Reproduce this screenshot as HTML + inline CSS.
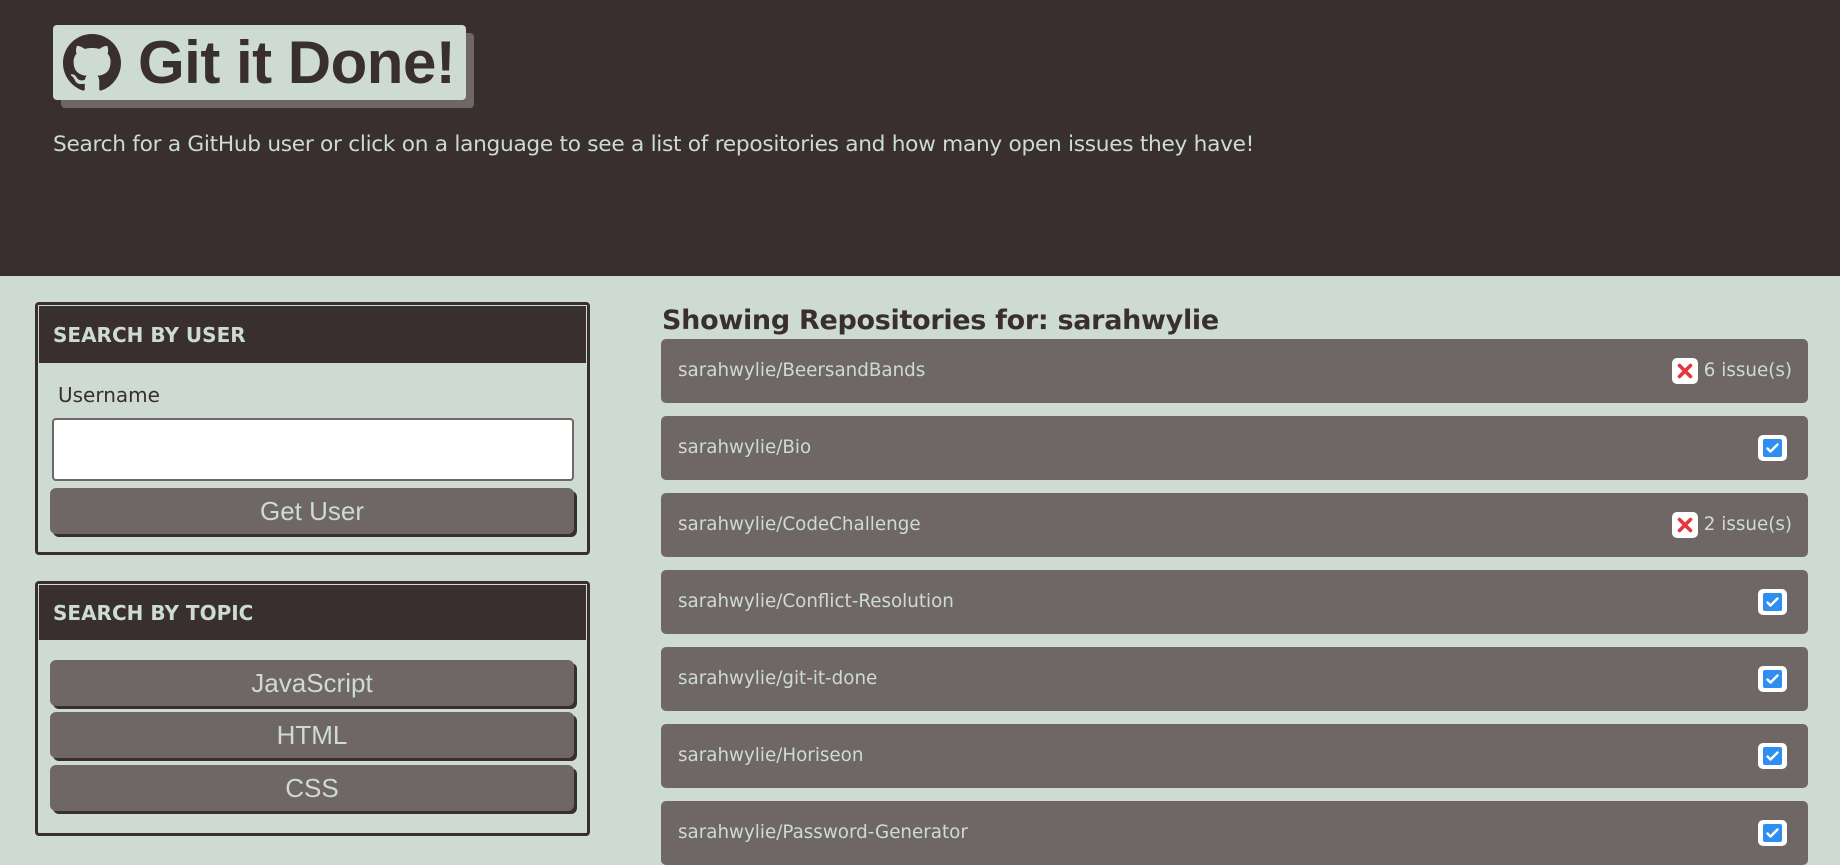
<!DOCTYPE html>
<html><head><meta charset="utf-8"><style>
*{box-sizing:border-box;margin:0;padding:0}
body{width:1840px;height:855px;overflow:hidden;background:#cddbd3;font-family:"DejaVu Sans","Liberation Sans",sans-serif;position:relative}
header{position:absolute;left:0;top:0;width:1840px;height:276px;background:#382f2e}
.logo{position:absolute;left:53px;top:25px;width:413px;height:75px;background:#cddbd3;border-radius:4px;box-shadow:8px 8px 0 #6f6766;color:#382f2e;font-family:"Liberation Sans",sans-serif;font-weight:bold;font-size:60px;line-height:75px;padding-left:85px;white-space:nowrap;letter-spacing:-0.5px}
.logo svg{position:absolute;left:10px;top:9px}
.sub{position:absolute;left:53px;top:132px;color:#cddbd3;font-size:21.7px;letter-spacing:-0.3px;white-space:nowrap}
.card{position:absolute;left:35px;width:555px;border:3px solid #382f2e;border-radius:4px}
.card h2{background:#382f2e;color:#cddbd3;font-size:20px;font-weight:bold;padding-left:14px;border:1px solid #cddbd3;border-bottom:none}
.btn{position:absolute;left:12px;width:524px;height:46px;background:#6f6766;border-radius:6px;box-shadow:3px 3px 0 #382f2e;color:#cddbd3;font-family:"Liberation Sans",sans-serif;font-size:26px;text-align:center;line-height:46px}
.h{position:absolute;left:662px;top:305px;font-size:27px;font-weight:bold;color:#382f2e;letter-spacing:-0.3px}
.row{position:absolute;left:661px;width:1147px;height:64px;background:#6f6766;border-radius:5px;color:#cddbd3;font-size:18.3px;line-height:64px;padding-left:17px}
.ok{position:absolute;right:21px;top:19px;width:29px;height:26px;background:#fff;border-radius:5px}
.ok svg{position:absolute;left:5px;top:4px}
.bad{position:absolute;right:110px;top:19px;width:26px;height:26px;background:#fff;border-radius:5px}
.bad svg{position:absolute;left:5px;top:5px}
.iss{position:absolute;right:16px;top:0}
</style></head><body>
<header>
<div class="logo"><svg width="58" height="58" viewBox="0 0 16 16"><path fill="#382f2e" d="M8 0C3.58 0 0 3.58 0 8c0 3.54 2.290 6.53 5.47 7.59.4.07.55-.17.55-.38 0-.19-.01-.82-.01-1.490-2.01.37-2.530-.49-2.690-.94-.09-.23-.48-.94-.82-1.130-.28-.15-.68-.52-.01-.53.63-.01 1.080.58 1.230.82.72 1.21 1.870.87 2.330.66.07-.52.28-.87.51-1.070-1.780-.2-3.640-.89-3.640-3.950 0-.87.31-1.59.82-2.150-.08-.2-.36-1.02.08-2.120 0 0 .67-.21 2.2.82.64-.18 1.32-.27 2-.27.68 0 1.36.09 2 .27 1.53-1.04 2.2-.82 2.2-.82.44 1.1.16 1.92.08 2.12.51.56.82 1.27.82 2.15 0 3.07-1.87 3.75-3.65 3.95.29.25.54.73.54 1.48 0 1.07-.01 1.93-.01 2.2 0 .21.15.46.55.38A8.013 8.013 0 0016 8c0-4.42-3.58-8-8-8z"/></svg>Git it Done!</div>
<div class="sub">Search for a GitHub user or click on a language to see a list of repositories and how many open issues they have!</div>
</header>

<div class="card" style="top:302px;height:253px">
<h2 style="height:58px;line-height:58px">SEARCH BY USER</h2>
<div style="position:absolute;left:20px;top:78px;font-size:20px;color:#382f2e">Username</div>
<div style="position:absolute;left:14px;top:113px;width:522px;height:63px;background:#fff;border:2px solid #6f6766;border-radius:4px"></div>
<div class="btn" style="top:183px">Get User</div>
</div>

<div class="card" style="top:581px;height:255px">
<h2 style="height:56px;line-height:56px">SEARCH BY TOPIC</h2>
<div class="btn" style="top:76px">JavaScript</div>
<div class="btn" style="top:128px">HTML</div>
<div class="btn" style="top:181px">CSS</div>
</div>

<div class="h">Showing Repositories for: sarahwylie</div>

<svg width="0" height="0" style="position:absolute"><defs>
<symbol id="ck" viewBox="0 0 19 18"><rect width="19" height="18" rx="2" fill="#2f8ff0"/><path d="M4.5 9.5l3 3 7-7" stroke="#fff" stroke-width="2.4" fill="none" stroke-linecap="round" stroke-linejoin="round"/></symbol>
<symbol id="xx" viewBox="0 0 16 16"><path d="M2.5 2.5l11 11M13.5 2.5l-11 11" stroke="#e8343b" stroke-width="3.6" stroke-linecap="round"/></symbol>
</defs></svg>

<div class="row" style="top:339px">sarahwylie/BeersandBands<span class="bad"><svg width="16" height="16"><use href="#xx"/></svg></span><span class="iss">6 issue(s)</span></div>
<div class="row" style="top:416px">sarahwylie/Bio<span class="ok"><svg width="19" height="18"><use href="#ck"/></svg></span></div>
<div class="row" style="top:493px">sarahwylie/CodeChallenge<span class="bad"><svg width="16" height="16"><use href="#xx"/></svg></span><span class="iss">2 issue(s)</span></div>
<div class="row" style="top:570px">sarahwylie/Conflict-Resolution<span class="ok"><svg width="19" height="18"><use href="#ck"/></svg></span></div>
<div class="row" style="top:647px">sarahwylie/git-it-done<span class="ok"><svg width="19" height="18"><use href="#ck"/></svg></span></div>
<div class="row" style="top:724px">sarahwylie/Horiseon<span class="ok"><svg width="19" height="18"><use href="#ck"/></svg></span></div>
<div class="row" style="top:801px">sarahwylie/Password-Generator<span class="ok"><svg width="19" height="18"><use href="#ck"/></svg></span></div>
</body></html>
